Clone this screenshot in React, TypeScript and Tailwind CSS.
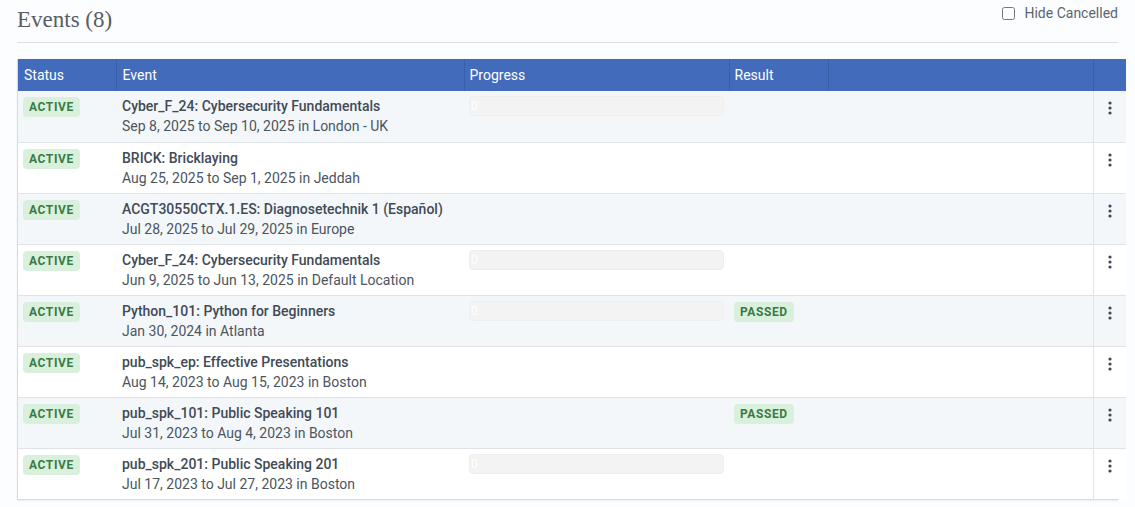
import React from "react"

type EventRow = {
  title: string
  when: string
  progress?: boolean
  passed?: boolean
}

const rows: EventRow[] = [
  { title: "Cyber_F_24: Cybersecurity Fundamentals", when: "Sep 8, 2025 to Sep 10, 2025 in London - UK", progress: true },
  { title: "BRICK: Bricklaying", when: "Aug 25, 2025 to Sep 1, 2025 in Jeddah" },
  { title: "ACGT30550CTX.1.ES: Diagnosetechnik 1 (Español)", when: "Jul 28, 2025 to Jul 29, 2025 in Europe" },
  { title: "Cyber_F_24: Cybersecurity Fundamentals", when: "Jun 9, 2025 to Jun 13, 2025 in Default Location", progress: true },
  { title: "Python_101: Python for Beginners", when: "Jan 30, 2024 in Atlanta", progress: true, passed: true },
  { title: "pub_spk_ep: Effective Presentations", when: "Aug 14, 2023 to Aug 15, 2023 in Boston" },
  { title: "pub_spk_101: Public Speaking 101", when: "Jul 31, 2023 to Aug 4, 2023 in Boston", passed: true },
  { title: "pub_spk_201: Public Speaking 201", when: "Jul 17, 2023 to Jul 27, 2023 in Boston", progress: true },
]

function Badge({ label }: { label: string }) {
  return (
    <span className="inline-flex h-[20px] items-center rounded-[4px] bg-[#d9f1dc] px-[6px] text-[12px] font-bold leading-none tracking-[0.6px] text-[#3a7a45]">
      {label}
    </span>
  )
}

function Kebab() {
  return (
    <svg width="6" height="14" viewBox="0 0 6 14" className="block text-[#3e4858]">
      <circle cx="3" cy="2" r="1.6" fill="currentColor" />
      <circle cx="3" cy="7" r="1.6" fill="currentColor" />
      <circle cx="3" cy="12" r="1.6" fill="currentColor" />
    </svg>
  )
}

export default function App() {
  return (
    <div className="min-h-[507px] w-[1135px] bg-[#fcfdfe] px-[17px] font-['Roboto','Liberation_Sans',sans-serif]">
      <div className="flex h-[43px] items-start justify-between border-b border-[#dcdfe4]">
        <h1 className="pt-[4px] font-['Liberation_Serif',serif] text-[23px] font-normal leading-[32px] text-[#585e64]">
          Events (8)
        </h1>
        <label className="mt-[4px] flex items-center gap-[9px] text-[14px] leading-[18px] text-[#5b6570]">
          <input type="checkbox" className="h-[13px] w-[13px]" />
          Hide Cancelled
        </label>
      </div>

      <div className="mt-[16px] border border-t-0 border-[#d6dbe1] shadow-[0_1px_2px_rgba(0,0,0,0.06)]">
        <table className="w-full table-fixed border-collapse text-[14px]">
          <colgroup>
            <col className="w-[98px]" />
            <col className="w-[348px]" />
            <col className="w-[265px]" />
            <col className="w-[99px]" />
            <col className="w-[265px]" />
            <col className="w-[33px]" />
          </colgroup>
          <thead>
            <tr className="h-[32px] bg-[#426bbb] text-left text-white">
              <th className="border-r border-[#3a5fa9] px-[6px] font-normal">Status</th>
              <th className="border-r border-[#3a5fa9] px-[6px] font-normal">Event</th>
              <th className="border-r border-[#3a5fa9] px-[5px] font-normal">Progress</th>
              <th className="border-r border-[#3a5fa9] px-[5px] font-normal">Result</th>
              <th className="border-r border-[#3a5fa9] font-normal"></th>
              <th className="font-normal"></th>
            </tr>
          </thead>
          <tbody>
            {rows.map((r, i) => (
              <tr
                key={i}
                className={`h-[51px] border-b border-[#dfe3e8] last:border-b-0 ${i % 2 === 0 ? "bg-[#f4f7fa]" : "bg-[#ffffff]"}`}
              >
                <td className="px-[5px] pt-[5px] align-top">
                  <Badge label="ACTIVE" />
                </td>
                <td className="px-[6px] pt-[5px] align-top leading-[20px]">
                  <div className="font-medium text-[#414a55]">{r.title}</div>
                  <div className="text-[#4b5560]">{r.when}</div>
                </td>
                <td className="px-[5px] pt-[5px] align-top">
                  {r.progress ? (
                    <div className="flex h-[20px] w-[255px] items-center rounded-[4px] border border-[#eeeeee] bg-[#f3f3f3] px-[1px] text-[12px] text-[#ffffff]">
                      0
                    </div>
                  ) : null}
                </td>
                <td className="px-[5px] pt-[5px] align-top">
                  {r.passed ? <Badge label="PASSED" /> : null}
                </td>
                <td className="border-r border-[#e2e4e7]"></td>
                <td className="pt-[10px] align-top">
                  <div className="flex justify-center">
                    <Kebab />
                  </div>
                </td>
              </tr>
            ))}
          </tbody>
        </table>
      </div>
    </div>
  )
}
